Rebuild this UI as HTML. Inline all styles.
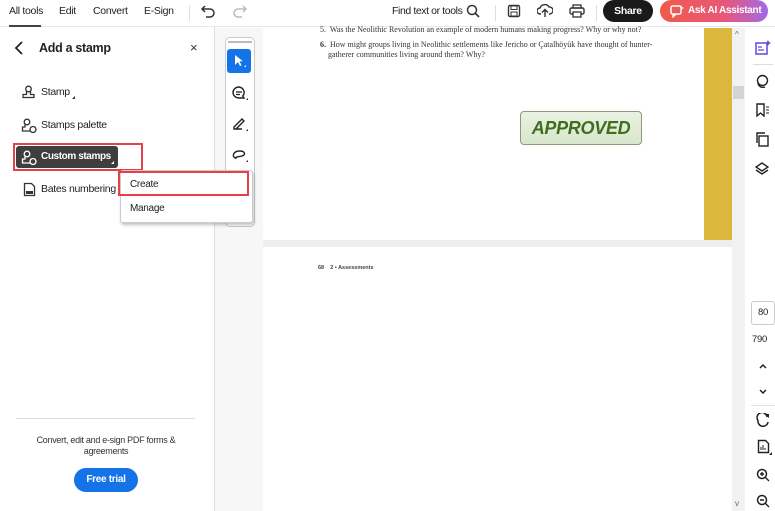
<!DOCTYPE html>
<html><head><style>
*{margin:0;padding:0;box-sizing:border-box}
body{width:775px;height:511px;overflow:hidden;background:#fff;font-family:"Liberation Sans",sans-serif;color:#222;position:relative;font-size:10px;letter-spacing:-0.3px}
.a{position:absolute;white-space:nowrap}
.serif{font-family:"Liberation Serif",serif;letter-spacing:0}
</style></head><body>
<!-- top bar -->
<div class="a" style="left:0;top:0;width:775px;height:27px;background:#fff;border-bottom:1px solid #e8e8e8"></div>
<div class="a" style="left:9px;top:5px;font-size:10.5px">All tools</div>
<div class="a" style="left:9px;top:25px;width:32px;height:2px;background:#444"></div>
<div class="a" style="left:59px;top:5px;font-size:10.5px">Edit</div>
<div class="a" style="left:93px;top:5px;font-size:10.5px">Convert</div>
<div class="a" style="left:144px;top:5px;font-size:10.5px">E-Sign</div>
<div class="a" style="left:189px;top:5px;width:1px;height:16px;background:#ddd"></div>
<svg class="a" style="left:200px;top:4px" width="16" height="14"><path d="M5 2L2 5l3 3M2 5h8a4 4 0 010 8H6" fill="none" stroke="#333" stroke-width="1.5"/></svg>
<svg class="a" style="left:232px;top:4px" width="16" height="14"><path d="M11 2l3 3-3 3M14 5H6a4 4 0 000 8h4" fill="none" stroke="#bbb" stroke-width="1.5"/></svg>
<div class="a" style="left:392px;top:5px;font-size:10.5px;letter-spacing:-0.4px">Find text or tools</div>
<svg class="a" style="left:466px;top:4px" width="14" height="14"><circle cx="6" cy="6" r="4.5" fill="none" stroke="#333" stroke-width="1.5"/><path d="M9.5 9.5L13 13" stroke="#333" stroke-width="1.6"/></svg>
<div class="a" style="left:495px;top:5px;width:1px;height:16px;background:#ddd"></div>
<svg class="a" style="left:507px;top:4px" width="14" height="14"><rect x="1.5" y="1.5" width="11" height="11" rx="1.5" fill="none" stroke="#333" stroke-width="1.4"/><rect x="4" y="2" width="6" height="3.5" fill="none" stroke="#333"/><rect x="4" y="8" width="6" height="4" fill="none" stroke="#333"/></svg>
<svg class="a" style="left:537px;top:3px" width="16" height="15"><path d="M4 11H3a3 3 0 010-6 5 5 0 019-1 3.5 3.5 0 011 7h-1M8 14V7M5 9.5L8 6.5l3 3" fill="none" stroke="#333" stroke-width="1.4"/></svg>
<svg class="a" style="left:569px;top:4px" width="16" height="14"><rect x="4" y="1" width="8" height="3" fill="none" stroke="#333" stroke-width="1.3"/><rect x="1" y="4" width="14" height="6" rx="1.5" fill="none" stroke="#333" stroke-width="1.4"/><rect x="4" y="8" width="8" height="5" fill="#fff" stroke="#333" stroke-width="1.3"/></svg>
<div class="a" style="left:596px;top:5px;width:1px;height:16px;background:#ddd"></div>
<div class="a" style="left:603px;top:0px;width:50px;height:22px;border-radius:11px;background:#1a1a1a;color:#fff;font-weight:bold;font-size:10.5px;text-align:center;line-height:22px">Share</div>
<div class="a" style="left:660px;top:0px;width:108px;height:22px;border-radius:11px;background:linear-gradient(90deg,#f05a4a,#e8577a 60%,#a06ae8);color:#fff;font-weight:bold;font-size:10px;line-height:22px;padding-left:28px">Ask AI Assistant</div>
<svg class="a" style="left:670px;top:4px" width="14" height="14"><rect x="1" y="2" width="10" height="8" rx="1.5" fill="none" stroke="#fff" stroke-width="1.4"/><path d="M3 10v3l3-3" fill="none" stroke="#fff" stroke-width="1.3"/><path d="M11 1l1 2 2 1-2 1-1 2" fill="#fff"/></svg>

<!-- gray gutter -->
<div class="a" style="left:215px;top:28px;width:48px;height:483px;background:#f7f7f7"></div>
<div class="a" style="left:225px;top:37px;width:30px;height:190px;background:#fff;border:1px solid #ccc;border-radius:5px"></div>
<div class="a" style="left:228px;top:41px;width:24px;height:2px;background:#bbb"></div>
<div class="a" style="left:227px;top:49px;width:24px;height:24px;background:#1473e6;border-radius:3px"></div>
<svg class="a" style="left:233px;top:54px" width="14" height="14"><path d="M2 1v10l3-3 2 4 1.5-.7-2-4H10z" fill="#fff"/><path d="M13 11v2h-2z" fill="#fff"/></svg>
<svg class="a" style="left:231px;top:85px" width="18" height="16"><path d="M8 2a6 5.5 0 100 11h5l-1.3-2A6 5.5 0 008 2z" fill="none" stroke="#222" stroke-width="1.4"/><path d="M5 7h6M5 9.5h4" stroke="#222" stroke-width="1.2"/><path d="M17 13v2h-2z" fill="#222"/></svg>
<svg class="a" style="left:231px;top:115px" width="18" height="17"><path d="M3 12l8-8 2 2-8 8H3zM3 14h8" fill="none" stroke="#222" stroke-width="1.4"/><path d="M17 14v2h-2z" fill="#222"/></svg>
<svg class="a" style="left:231px;top:146px" width="18" height="17"><path d="M5 12c-4 0-4-7 4-7 5 0 6 4 2 5-3 1-7 0-6 3" fill="none" stroke="#222" stroke-width="1.4"/><path d="M17 14v2h-2z" fill="#222"/></svg>

<!-- left panel -->
<div class="a" style="left:214px;top:27px;width:1px;height:484px;background:#ddd"></div>
<svg class="a" style="left:14px;top:41px" width="10" height="14"><path d="M8 1L2 7l6 6" fill="none" stroke="#222" stroke-width="1.8"/></svg>
<div class="a" style="left:39px;top:41px;font-size:12.5px;font-weight:bold;color:#222">Add a stamp</div>
<div class="a" style="left:190px;top:40px;font-size:13px;color:#333">×</div>

<svg class="a" style="left:21px;top:85px" width="15" height="15"><circle cx="7.5" cy="4" r="2.8" fill="none" stroke="#333" stroke-width="1.3"/><path d="M5.5 6.5v3H2v3h11v-3H9.5v-3" fill="none" stroke="#333" stroke-width="1.3"/></svg>
<div class="a" style="left:41px;top:86px;font-size:10.5px">Stamp</div>
<div class="a" style="left:72px;top:96px;border-left:3px solid transparent;border-bottom:3px solid #333"></div>

<svg class="a" style="left:21px;top:118px" width="16" height="16"><circle cx="6" cy="4" r="2.8" fill="none" stroke="#333" stroke-width="1.3"/><path d="M4 6.5v2.5H1.5v4H9" fill="none" stroke="#333" stroke-width="1.3"/><circle cx="12" cy="11.5" r="3" fill="none" stroke="#333" stroke-width="1.3"/></svg>
<div class="a" style="left:41px;top:119px;font-size:10.5px">Stamps palette</div>

<div class="a" style="left:13px;top:143px;width:130px;height:28px;border:2px solid #e8404a"></div>
<div class="a" style="left:16px;top:146px;width:102px;height:22px;background:#3e3e3e;border-radius:3px"></div>
<svg class="a" style="left:21px;top:150px" width="16" height="16"><circle cx="6" cy="4" r="2.8" fill="none" stroke="#fff" stroke-width="1.3"/><path d="M4 6.5v2.5H1.5v4H9" fill="none" stroke="#fff" stroke-width="1.3"/><circle cx="12" cy="11.5" r="3" fill="none" stroke="#fff" stroke-width="1.3"/></svg>
<div class="a" style="left:41px;top:151px;font-size:10px;color:#fff;font-weight:bold;letter-spacing:-0.4px">Custom stamps</div>
<div class="a" style="left:111px;top:161px;border-left:3px solid transparent;border-bottom:3px solid #fff"></div>

<svg class="a" style="left:23px;top:182px" width="13" height="15"><path d="M1.5 1.5h7l3 3v9h-10z" fill="none" stroke="#333" stroke-width="1.3"/><rect x="3" y="9" width="7" height="3" fill="#333"/></svg>
<div class="a" style="left:41px;top:183px;font-size:10.5px">Bates numbering</div>

<!-- dropdown -->
<div class="a" style="left:120px;top:170px;width:133px;height:53px;background:#fff;border:1px solid #ccc;border-radius:3px;box-shadow:1px 2px 3px rgba(0,0,0,.25)"></div>
<div class="a" style="left:118px;top:171px;width:131px;height:25px;border:2px solid #e8404a"></div>
<div class="a" style="left:130px;top:179px;font-size:10px">Create</div>
<div class="a" style="left:130px;top:203px;font-size:10px">Manage</div>

<div class="a" style="left:16px;top:418px;width:179px;height:1px;background:#ddd"></div>
<div class="a" style="left:0;top:435px;width:212px;text-align:center;font-size:9px;line-height:11px;color:#333;white-space:normal">Convert, edit and e-sign PDF forms &amp;<br>agreements</div>
<div class="a" style="left:74px;top:468px;width:64px;height:24px;border-radius:12px;background:#1473e6;color:#fff;font-weight:bold;font-size:10px;text-align:center;line-height:24px">Free trial</div>

<!-- page -->
<div class="a" style="left:263px;top:28px;width:469px;height:212px;background:#fff"></div>
<div class="a" style="left:263px;top:240px;width:469px;height:7px;background:#eee"></div>
<div class="a" style="left:704px;top:28px;width:28px;height:212px;background:#dbb73c"></div>
<div class="a serif" style="left:320px;top:25px;font-size:8px;line-height:10px;color:#333">5.&nbsp; Was the Neolithic Revolution an example of modern humans making progress? Why or why not?</div>
<div class="a serif" style="left:320px;top:40px;font-size:8px;line-height:10px;color:#333"><b>6.</b>&nbsp; How might groups living in Neolithic settlements like Jericho or Çatalhöyük have thought of hunter-<br>&nbsp;&nbsp;&nbsp;&nbsp;gatherer communities living around them? Why?</div>
<div class="a" style="left:520px;top:111px;width:122px;height:34px;border:1px solid #8a9a7a;border-radius:4px;background:linear-gradient(#eaf2e2,#d8e6cc);color:#3f6e1e;font-weight:bold;font-style:italic;font-size:18px;letter-spacing:-0.3px;text-align:center;line-height:32px">APPROVED</div>
<div class="a" style="left:318px;top:265px;font-size:5.5px;font-weight:bold;color:#444;letter-spacing:0">68&nbsp;&nbsp;&nbsp; 2 • Assessments</div>

<!-- scrollbar -->
<div class="a" style="left:732px;top:28px;width:13px;height:483px;background:#f2f2f2"></div>
<div class="a" style="left:733px;top:86px;width:11px;height:13px;background:#d4d4d4"></div>
<div class="a" style="left:735px;top:30px;font-size:8px;color:#666">^</div>

<!-- right rail -->
<div class="a" style="left:745px;top:28px;width:30px;height:483px;background:#fff"></div>
<svg class="a" style="left:755px;top:40px" width="16" height="15"><rect x="1" y="3" width="11" height="11" fill="none" stroke="#5a4be0" stroke-width="1.5"/><path d="M3 7h4M3 10h6" stroke="#5a4be0" stroke-width="1.3"/><path d="M13 0l1 2 2 1-2 1-1 2-1-2-2-1 2-1z" fill="#5a4be0"/></svg>
<div class="a" style="left:753px;top:64px;width:20px;height:1px;background:#ddd"></div>
<svg class="a" style="left:755px;top:74px" width="14" height="14"><circle cx="7.5" cy="6.5" r="5" fill="none" stroke="#222" stroke-width="1.4"/><path d="M3 9a5 5 0 007 4" fill="none" stroke="#222" stroke-width="1.4"/></svg>
<svg class="a" style="left:755px;top:103px" width="14" height="14"><path d="M2 1h7v12l-3.5-3L2 13z" fill="none" stroke="#222" stroke-width="1.4"/><path d="M11 4h3M11 7h3M11 10h3" stroke="#222"/></svg>
<svg class="a" style="left:755px;top:132px" width="14" height="15"><rect x="4" y="4" width="9" height="10" fill="none" stroke="#222" stroke-width="1.4"/><path d="M2 11V1h8" fill="none" stroke="#222" stroke-width="1.4"/></svg>
<svg class="a" style="left:755px;top:162px" width="14" height="14"><path d="M7 1l6 4-6 4-6-4z M1 8l6 4 6-4" fill="none" stroke="#222" stroke-width="1.4"/></svg>
<div class="a" style="left:751px;top:301px;width:24px;height:24px;border:1px solid #ccc;border-radius:3px;font-size:9.5px;text-align:center;line-height:22px">80</div>
<div class="a" style="left:752px;top:334px;font-size:9.5px">790</div>
<svg class="a" style="left:759px;top:363px" width="8" height="6"><path d="M1 5l3-3 3 3" fill="none" stroke="#222" stroke-width="1.5"/></svg>
<svg class="a" style="left:759px;top:389px" width="8" height="6"><path d="M1 1l3 3 3-3" fill="none" stroke="#222" stroke-width="1.5"/></svg>
<div class="a" style="left:751px;top:405px;width:24px;height:1px;background:#e2e2e2"></div>
<svg class="a" style="left:756px;top:413px" width="14" height="14"><path d="M11 4A5 5 0 102 7.5 5 5 0 0012 9" fill="none" stroke="#222" stroke-width="1.5"/><path d="M8 1h5v4z" fill="#222"/></svg>
<svg class="a" style="left:757px;top:439px" width="16" height="17"><path d="M1.5 1.5h7l3 3v9h-10z" fill="none" stroke="#222" stroke-width="1.4"/><path d="M4 11V8M6 11V6M8 11V9" stroke="#222"/><path d="M15 13v3h-3z" fill="#222"/></svg>
<svg class="a" style="left:756px;top:468px" width="14" height="14"><circle cx="6" cy="6" r="4.5" fill="none" stroke="#222" stroke-width="1.5"/><path d="M9.5 9.5L13 13M4 6h4M6 4v4" stroke="#222" stroke-width="1.4"/></svg>
<svg class="a" style="left:756px;top:494px" width="14" height="14"><circle cx="6" cy="6" r="4.5" fill="none" stroke="#222" stroke-width="1.5"/><path d="M9.5 9.5L13 13M4 6h4" stroke="#222" stroke-width="1.4"/></svg>
<div class="a" style="left:735px;top:499px;font-size:8px;color:#666">v</div>
</body></html>
